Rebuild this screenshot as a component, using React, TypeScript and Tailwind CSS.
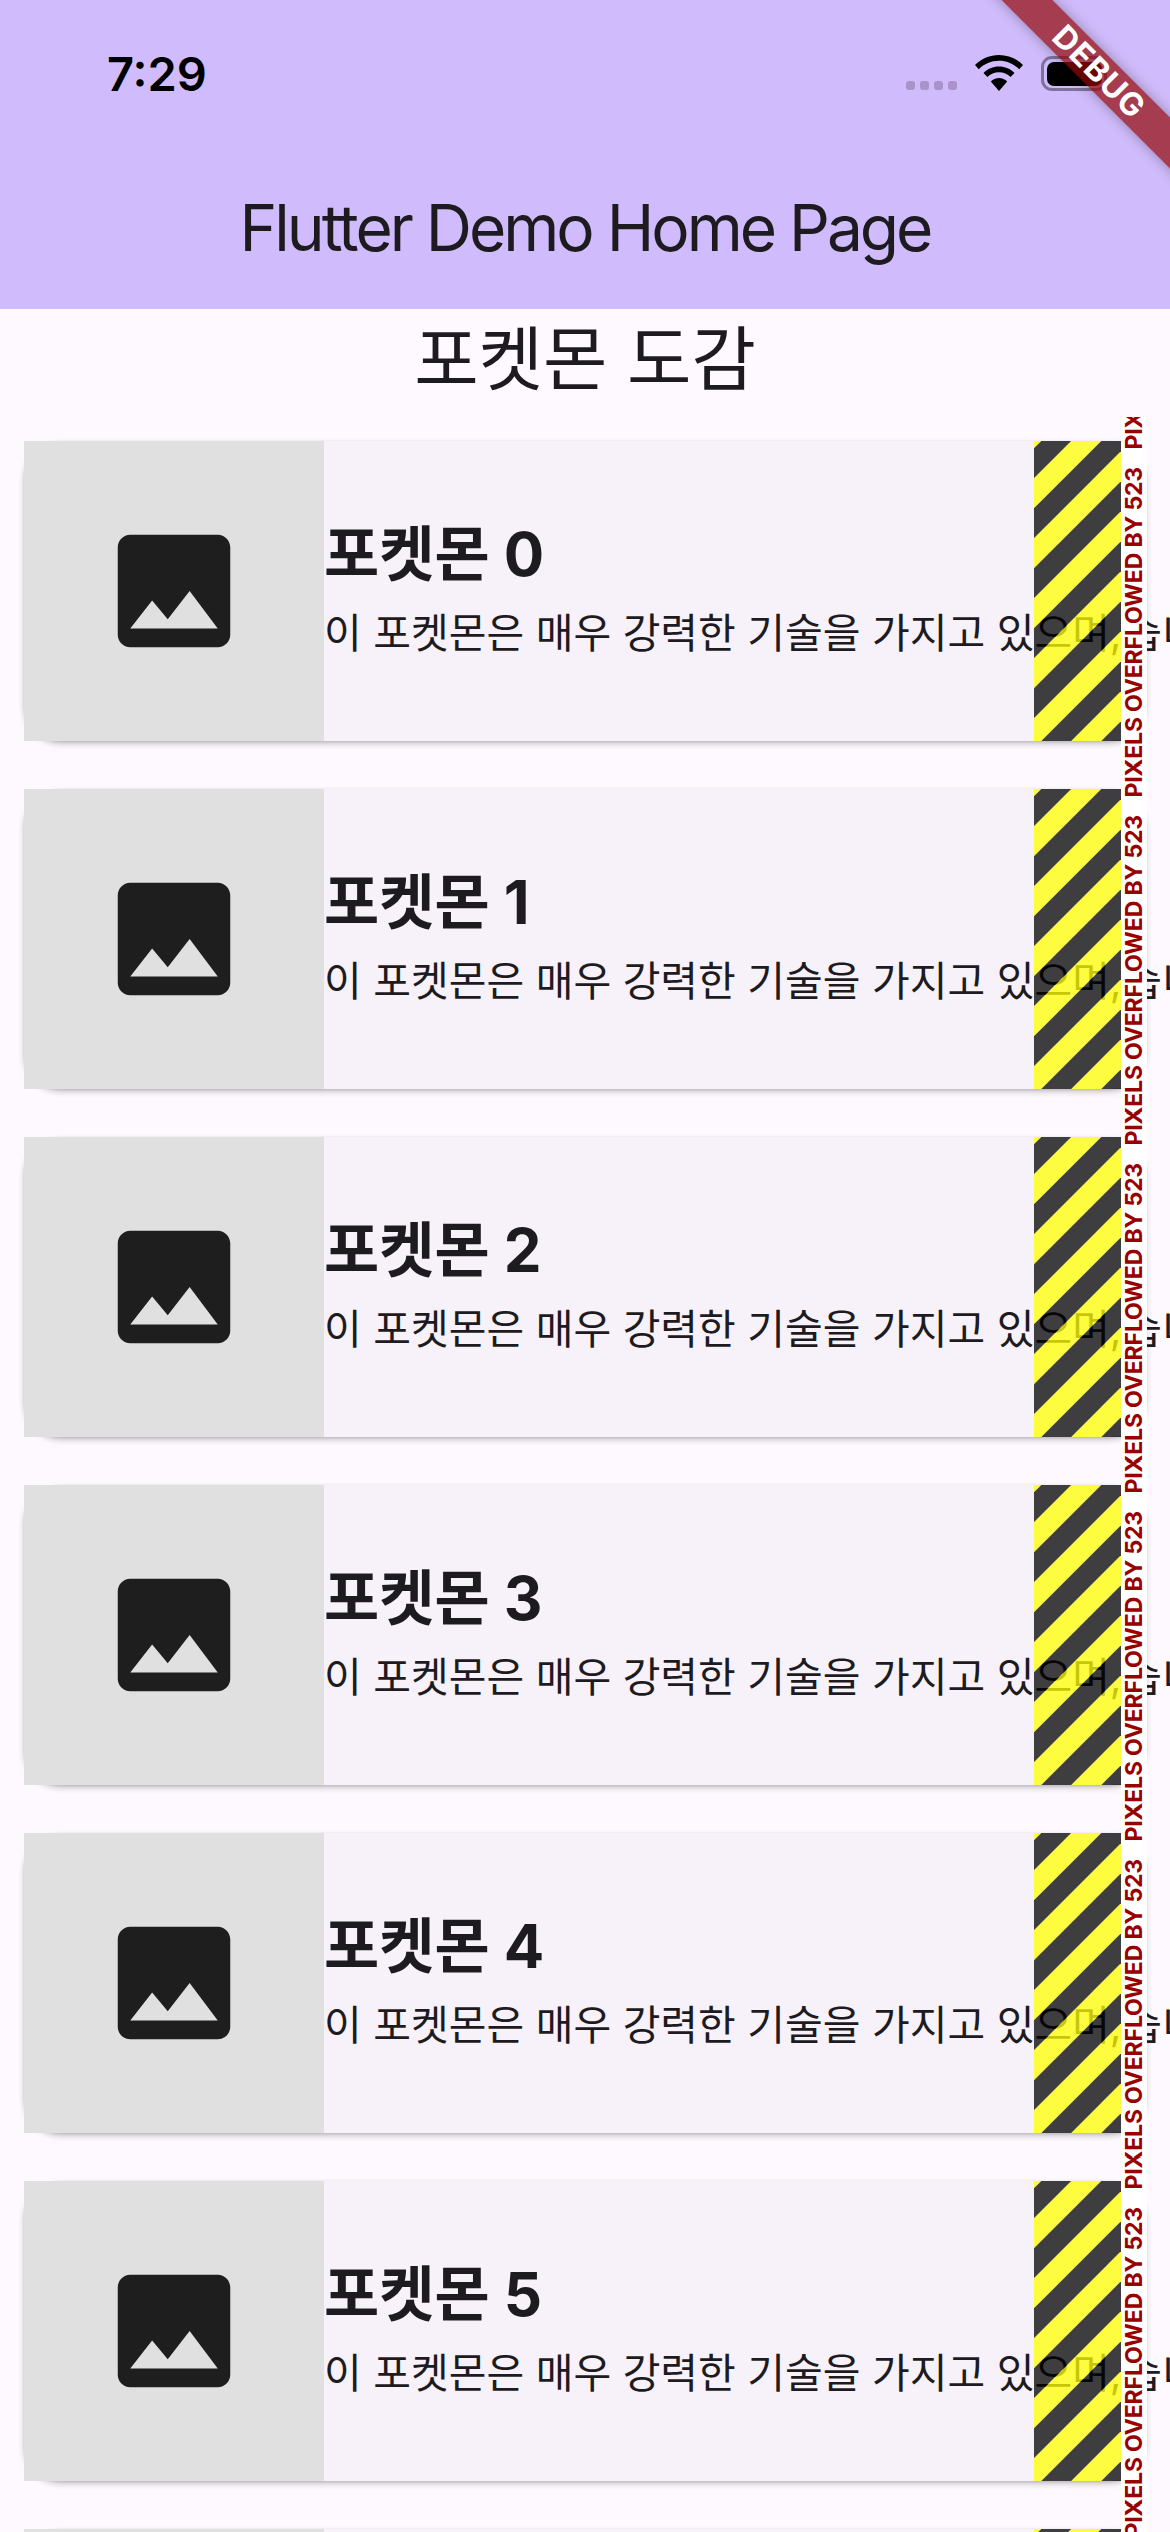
const pokemon = [0, 1, 2, 3, 4, 5, 6];
// hazard bands: x + y = offset, 30px wide each
const bands = [-22.67, 7.33, 37.33, 67.33, 97.33, 127.33, 157.33, 187.33, 217.33, 247.33, 277.33, 307.33, 337.33, 367.33];

function ImageIcon() {
  return (
    <svg viewBox="0 0 24 24" className="h-[150px] w-[150px] fill-[#1e1e1e]" aria-hidden>
      <path d="M21 19V5c0-1.1-.9-2-2-2H5c-1.1 0-2 .9-2 2v14c0 1.1.9 2 2 2h14c1.1 0 2-.9 2-2zM8.5 13.5l2.5 3.01L14.5 12l4.5 6H5l3.5-4.5z" />
    </svg>
  );
}

function WifiIcon() {
  return (
    <svg viewBox="0 0 48 36" className="h-[36px] w-[48px] fill-black" aria-hidden>
      <path d="M24 0C15 0 6.500 3.500 0 10l3.800 4.200C9.200 8.900 16.300 5.800 24 5.800s14.800 3.100 20.200 8.400L48 10C41.500 3.500 33 0 24 0z" />
      <path d="M24 11.500c-6 0-11.500 2.400-15.500 6.400l3.900 4.200c3-3 7.100-4.800 11.600-4.800s8.600 1.800 11.600 4.800l3.900-4.200c-4-4-9.500-6.400-15.500-6.400z" />
      <path d="M24 23c-3.200 0-6.100 1.300-8.200 3.400L24 36l8.200-9.600C30.100 24.300 27.200 23 24 23z" />
    </svg>
  );
}

function HazardStripes() {
  return (
    <svg viewBox="0 0 87 300" className="absolute inset-y-0 right-[25px] h-[300px] w-[87px]" aria-hidden>
      {bands.map((c, i) => (
        <polygon
          key={c}
          points={`${c},0 ${c + 30},0 ${c - 270},300 ${c - 300},300`}
          fill={i % 2 === 0 ? "#ffff00" : "#000000"}
          fillOpacity={0.75}
        />
      ))}
    </svg>
  );
}

function StatusBar() {
  return (
    <div className="flex h-[147px] items-start justify-between pl-[107px] pr-[63px] pt-[55px]">
      <span className="text-[47px] font-semibold leading-[38px] text-black">7:29</span>
      <div className="flex items-end">
        <div className="mb-[1px] flex gap-[5px]">
          <span className="h-[9px] w-[9px] rounded-[3px] bg-[#a993c9]" />
          <span className="h-[9px] w-[9px] rounded-[3px] bg-[#a993c9]" />
          <span className="h-[9px] w-[9px] rounded-[3px] bg-[#a993c9]" />
          <span className="h-[9px] w-[9px] rounded-[3px] bg-[#a993c9]" />
        </div>
        <div className="ml-[18px]">
          <WifiIcon />
        </div>
        <div className="ml-[18px] flex h-[35px] w-[66px] items-center justify-center rounded-[11px] border-[3px] border-[#7f7299]">
          <span className="h-[24px] w-[55px] rounded-[7px] bg-black" />
        </div>
      </div>
    </div>
  );
}

function PokemonCard({ id }: { id: number }) {
  return (
    <div className="relative flex h-[300px] w-[1122px] shrink-0 rounded-[36px] bg-[#f7f2fa] shadow-[0_3px_6px_rgba(0,0,0,0.2),0_1px_3px_rgba(0,0,0,0.12)]">
      <div className="flex h-[300px] w-[300px] shrink-0 items-center justify-center bg-[#e0e0e0]">
        <ImageIcon />
      </div>
      <div className="flex min-w-0 flex-col justify-center whitespace-nowrap pb-[1px] text-[#1d1b20]">
        <p className="mb-[13px] text-[60px] font-bold leading-[72px]">포켓몬 {id}</p>
        <p className="text-[41px] leading-[60px]">
          이 포켓몬은 매우 강력한 기술을 가지고 있으며, <span className="-ml-[9px]">습니다</span>
        </p>
      </div>
      <HazardStripes />
      <div className="absolute -bottom-6 -top-6 right-[-1px] w-[26px] overflow-hidden bg-white">
        <div className="absolute bottom-[-32px] left-0 flex w-[26px] rotate-180 items-center whitespace-nowrap text-[23px] font-bold leading-[26px] tracking-[-0.15px] text-[#990000] [writing-mode:vertical-rl]">
          PIXELS OVERFLOWED BY 523
        </div>
        <div className="absolute bottom-[316px] left-0 flex w-[26px] rotate-180 items-center whitespace-nowrap text-[23px] font-bold leading-[26px] tracking-[-0.15px] text-[#990000] [writing-mode:vertical-rl]">
          PIXELS
        </div>
      </div>
    </div>
  );
}

export default function App() {
  return (
    <div className="relative flex h-[2532px] w-[1170px] flex-col overflow-hidden bg-[#fef8ff] [font-family:Inter,'Noto_Sans_CJK_KR',sans-serif]">
      <header className="h-[309px] shrink-0 bg-[#d0bcfc]">
        <StatusBar />
        <h1 className="text-center text-[64px] font-normal leading-[162px] tracking-[-3px] text-[#1d1b20]">
          Flutter Demo Home Page
        </h1>
      </header>

      <h2 className="h-[108px] shrink-0 text-center text-[70px] font-normal leading-[102px] text-[#1d1b20]">포켓몬 도감</h2>

      <div className="mt-6 flex flex-col gap-12 px-6">
        {pokemon.map((id) => (
          <PokemonCard id={id} key={id} />
        ))}
      </div>

      <div className="absolute left-[949px] top-[54px] z-10 flex h-[36px] w-[300px] rotate-45 items-center justify-center bg-[rgba(147,5,5,0.7)] shadow-[0_0_14px_rgba(0,0,0,0.3)]">
        <span className="text-[32px] font-bold leading-none tracking-[1px] text-white">DEBUG</span>
      </div>
    </div>
  );
}
